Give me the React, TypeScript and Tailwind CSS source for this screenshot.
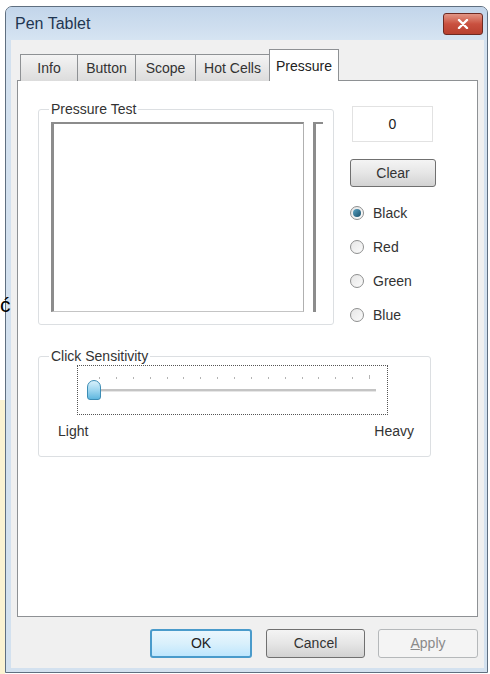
import React from 'react';

const tabs = [
  { label: 'Info', w: 'w-[58px]' },
  { label: 'Button', w: 'w-[59px]' },
  { label: 'Scope', w: 'w-[61px]' },
  { label: 'Hot Cells', w: 'w-[75px]' },
];

const colors = ['Black', 'Red', 'Green', 'Blue'];

function Radio({ checked }: { checked?: boolean }) {
  return (
    <div className="w-[14px] h-[14px] rounded-full border border-[#8e8f8f] bg-gradient-to-br from-[#e6e6e6] to-[#fbfbfb] flex items-center justify-center">
      {checked && <div className="w-[8px] h-[8px] rounded-full bg-gradient-to-br from-[#5aa3c3] to-[#17506b]" />}
    </div>
  );
}

export default function App() {
  return (
    <div className="relative w-[490px] h-[674px] bg-white overflow-hidden flex font-['Liberation_Sans',Arial,sans-serif] text-[14px] text-[#222]">
      {/* left edge strip */}
      <div className="w-[5px] flex flex-col">
        <div className="h-[400px]" />
        <div className="flex-1 bg-[#fbf3d2]" />
      </div>

      {/* Window */}
      <div className="mt-[6px] w-[483px] h-[667px] rounded-t-[7px] border border-[#5f6f80] bg-[#d3e1ef] flex flex-col">
        {/* Title bar */}
        <div className="h-[33px] flex items-center justify-between pl-[9px] pr-[4px] rounded-t-[6px] bg-gradient-to-b from-[#c2d5ea] to-[#d6e4f2]">
          <span className="text-[16px] text-[#1f3652] leading-none">Pen Tablet</span>
          <div className="w-[40px] h-[22px] rounded-[3px] border border-[#6d2a22] bg-gradient-to-b from-[#e29585] via-[#c9503f] to-[#b8402f] flex items-center justify-center">
            <svg width="12" height="10" viewBox="0 0 12 10">
              <path d="M2 1 L10 9 M10 1 L2 9" stroke="#fff" strokeWidth="2.4" strokeLinecap="round" />
            </svg>
          </div>
        </div>

        {/* Client area */}
        <div className="flex-1 ml-[5px] mr-[3px] mb-[4px] bg-[#f0f0f0] pt-[9px] flex flex-col">
          {/* Tabs */}
          <div className="flex items-end pl-[9px] h-[32px] -mb-px relative z-10">
            {tabs.map((t) => (
              <div
                key={t.label}
                className={`${t.w} h-[27px] border border-[#8e9194] border-b-0 -mr-px bg-gradient-to-b from-[#f4f4f4] to-[#dcdcdc] flex items-center justify-center text-[#333]`}
              >
                {t.label}
              </div>
            ))}
            <div className="w-[70px] h-[32px] border border-[#8e9194] border-b-0 bg-white flex items-start justify-center pt-[6px] text-[#222]">
              Pressure
            </div>
          </div>

          {/* Tab panel */}
          <div className="ml-[6px] w-[461px] h-[537px] border border-[#8e9194] bg-white pl-[20px] pt-[20px] flex flex-col">
            <div className="flex">
              {/* Pressure Test group */}
              <fieldset className="border border-[#dcdfe2] rounded-[3px] pl-[12px] pr-[10px] pb-[10px] flex">
                <legend className="px-[2px] -ml-[2px] leading-[16px] text-[#333]">Pressure Test</legend>
                <div className="flex mt-[5px]">
                  <div className="w-[253px] h-[190px] border-l-[3px] border-t-[2px] border-r border-b border-l-[#8c8c8c] border-t-[#8c8c8c] border-r-[#b0b0b0] border-b-[#c4c4c4] bg-white" />
                  <div className="ml-[9px] w-[10px] h-[190px] border-l-[3px] border-t-[2px] border-[#8c8c8c]" />
                </div>
              </fieldset>

              {/* Right column */}
              <div className="ml-[16px] mt-[5px] flex flex-col">
                <div className="ml-[2px] w-[81px] h-[36px] border border-[#e2e2e2] bg-white flex items-center justify-center">0</div>
                <div className="mt-[17px] w-[86px] h-[28px] rounded-[3px] border border-[#707070] bg-gradient-to-b from-[#f4f4f4] via-[#e6e6e6] to-[#d2d2d2] flex items-center justify-center text-[#333]">
                  Clear
                </div>
                <div className="mt-[16px] flex flex-col gap-[14px]">
                  {colors.map((c, i) => (
                    <div key={c} className="h-[20px] flex items-center gap-[9px]">
                      <Radio checked={i === 0} />
                      <span className="text-[#333]">{c}</span>
                    </div>
                  ))}
                </div>
              </div>
            </div>

            {/* Click Sensitivity group */}
            <fieldset className="mt-[23px] w-[393px] border border-[#dcdfe2] rounded-[3px] pl-[19px] pr-[16px] pb-[17px]">
              <legend className="ml-[-9px] px-[2px] leading-[16px] text-[#333]">Click Sensitivity</legend>
              <div className="ml-[19px] mt-[1px] w-[311px] h-[50px] border border-dotted border-[#555] flex flex-col">
                <div className="mt-[9px] ml-[21px] mr-[17px] h-[4px] flex justify-between items-end">
                  {Array.from({ length: 17 }).map((_, i) => (
                    <div key={i} className={`w-[1px] ${i === 16 ? 'h-[4px]' : 'h-[2px]'} bg-[#b4b4b4]`} />
                  ))}
                </div>
                <div className="mt-[1px] h-[20px] flex items-center pl-[9px] pr-[11px]">
                  <div className="w-[14px] h-[20px] rounded-t-[7px] rounded-b-[3px] border border-[#3d8db5] bg-gradient-to-b from-[#d8f1fb] via-[#9fd7f0] to-[#5eb7df] relative z-10" />
                  <div className="flex-1 h-[3px] bg-[#c4c4c4] border-b border-[#e6e6e6]" />
                </div>
              </div>
              <div className="mt-[8px] flex justify-between leading-[16px] text-[#333]">
                <span>Light</span>
                <span>Heavy</span>
              </div>
            </fieldset>
          </div>

          {/* Dialog buttons */}
          <div className="mt-[12px] pr-[6px] flex justify-end">
            <div className="w-[102px] h-[29px] rounded-[3px] border-2 border-[#4a9bcb] bg-gradient-to-b from-[#eaf6fd] via-[#d9f0fc] to-[#bee6fd] flex items-center justify-center text-[#222]">
              OK
            </div>
            <div className="ml-[14px] w-[99px] h-[29px] rounded-[3px] border border-[#707070] bg-gradient-to-b from-[#f4f4f4] via-[#e6e6e6] to-[#d2d2d2] flex items-center justify-center text-[#333]">
              Cancel
            </div>
            <div className="ml-[13px] w-[100px] h-[29px] rounded-[3px] border border-[#b5b8ba] bg-[#f4f4f4] flex items-center justify-center text-[#8a8a8a]">
              <span><span className="underline">A</span>pply</span>
            </div>
          </div>
        </div>
      </div>

      <span className="absolute left-0 top-[293px] text-[21px] leading-[24px] text-black">ć</span>
    </div>
  );
}
